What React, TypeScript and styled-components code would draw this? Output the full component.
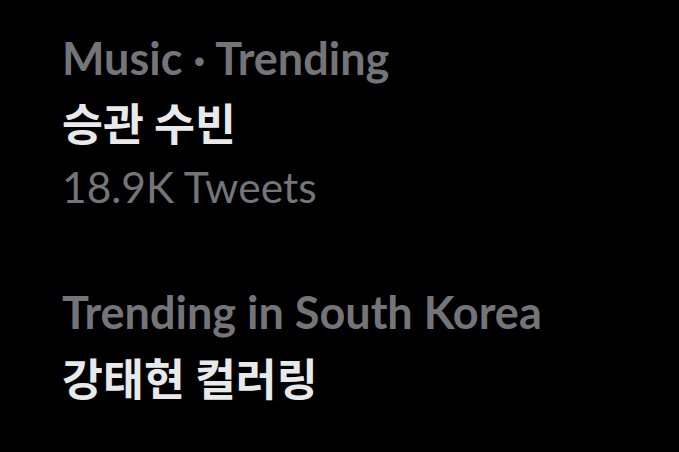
import React from 'react'
import styled, { createGlobalStyle } from 'styled-components'

const GlobalStyle = createGlobalStyle`
  html, body {
    margin: 0;
    padding: 0;
    background: #000;
  }
  body {
    font-family: Lato, "Noto Sans CJK KR", sans-serif;
  }
`

const Page = styled.div`
  width: 679px;
  height: 452px;
  overflow: hidden;
  background: #000;
  padding: 28px 0 0 62px;
  box-sizing: border-box;
  display: flex;
  flex-direction: column;
  gap: 64px;
`

const Trend = styled.div`
  display: flex;
  flex-direction: column;
`

const Context = styled.div`
  color: #737579;
  font-size: 45px;
  font-weight: 700;
  line-height: 60px;
  white-space: nowrap;
`

const Title = styled.div<{ $last?: boolean }>`
  color: #e7e9ea;
  font-family: "Noto Sans CJK KR", sans-serif;
  font-size: 44.5px;
  font-weight: 700;
  line-height: ${(p) => (p.$last ? '70px' : '68px')};
  white-space: nowrap;
`

const Count = styled.div`
  color: #737579;
  font-size: 42.5px;
  font-weight: 400;
  line-height: 62px;
  white-space: nowrap;
`

type TrendData = {
  context: string
  title: string
  count?: string
}

const trends: TrendData[] = [
  { context: 'Music · Trending', title: '승관 수빈', count: '18.9K Tweets' },
  { context: 'Trending in South Korea', title: '강태현 컬러링' },
]

const App = () => {
  return (
    <>
      <GlobalStyle />
      <Page>
        {trends.map((t) => (
          <Trend key={t.title}>
            <Context>{t.context}</Context>
            <Title $last={!t.count}>{t.title}</Title>
            {t.count && <Count>{t.count}</Count>}
          </Trend>
        ))}
      </Page>
    </>
  )
}

export default App
